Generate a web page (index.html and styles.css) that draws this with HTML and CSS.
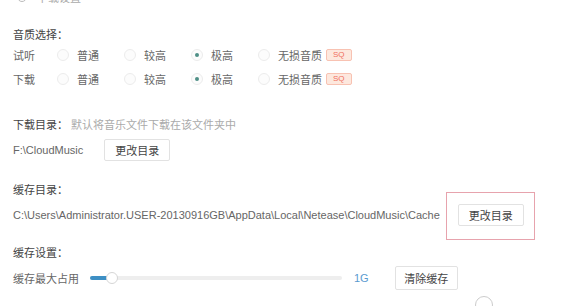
FILE: index.html
```html
<!DOCTYPE html>
<html lang="zh-CN">
<head>
    <meta charset="UTF-8">
    <title>下载设置</title>
    <link rel="stylesheet" href="styles.css">
</head>
<body>
    <!-- header cut off at the top -->
    <div class="top">
        <span class="top-icon"></span>
        <span class="top-text">下载设置</span>
    </div>

    <!-- Quality -->
    <div class="title">音质选择：</div>
    <div class="row">
        <span class="row-label">试听</span>
        <label class="opt"><span class="radio"></span>普通</label>
        <label class="opt"><span class="radio"></span>较高</label>
        <label class="opt"><span class="radio on"></span>极高</label>
        <label class="opt opt-last"><span class="radio"></span>无损音质<span class="badge">SQ</span></label>
    </div>
    <div class="row">
        <span class="row-label">下载</span>
        <label class="opt"><span class="radio"></span>普通</label>
        <label class="opt"><span class="radio"></span>较高</label>
        <label class="opt"><span class="radio on"></span>极高</label>
        <label class="opt opt-last"><span class="radio"></span>无损音质<span class="badge">SQ</span></label>
    </div>

    <!-- Download folder -->
    <div class="title title-dl">下载目录：<span class="desc">默认将音乐文件下载在该文件夹中</span></div>
    <div class="row row-dir">
        <span class="path">F:\CloudMusic</span>
        <button class="btn btn-dir">更改目录</button>
    </div>

    <!-- Cache folder -->
    <div class="title title-cache">缓存目录：</div>
    <div class="row row-dir">
        <span class="path">C:\Users\Administrator.USER-20130916GB\AppData\Local\Netease\CloudMusic\Cache</span>
        <div class="mark">
            <button class="btn">更改目录</button>
        </div>
    </div>

    <!-- Cache size -->
    <div class="title title-size">缓存设置：</div>
    <div class="row row-dir">
        <span class="path">缓存最大占用</span>
        <div class="slider">
            <div class="fill" style="width: 20px"></div>
            <span class="thumb"></span>
        </div>
        <span class="size">1G</span>
        <button class="btn btn-clear">清除缓存</button>
    </div>

    <div class="foot">
        <span class="foot-icon"></span>
    </div>
</body>
</html>
```

FILE: styles.css
```css
body {
    font-family: "Liberation Sans", "Noto Sans CJK SC", sans-serif;
    font-size: 11px;
    color: #666;
    margin: 0;
    padding: 0 0 0 13px;
    background: #fff;
    overflow: hidden;
}
.top {
    display: flex;
    align-items: center;
    height: 14px;
    margin-top: -10px;
    padding-left: 4px;
    color: #aaa;
}
.top-icon {
    width: 8px;
    height: 8px;
    border: 1px solid #bbb;
    border-radius: 50%;
    margin-right: 10px;
}
.title {
    height: 16px;
    line-height: 16px;
    margin-top: 23px;
    color: #444;
}
.title-dl {
    margin-top: 26px;
}
.title-cache {
    margin-top: 20px;
}
.title-size {
    margin-top: 18px;
}
.desc {
    color: #aaa;
    margin-left: 3px;
}
.row {
    display: flex;
    align-items: center;
    height: 24px;
    white-space: nowrap;
}
.row-dir {
    margin-top: 5px;
}
.row-label {
    width: 44px;
    flex-shrink: 0;
}
.opt {
    display: flex;
    align-items: center;
    flex-shrink: 0;
    width: 67px;
    color: #666;
}
.opt-last {
    width: auto;
}
.radio {
    box-sizing: border-box;
    width: 12px;
    height: 12px;
    border: 1px solid #ececec;
    border-radius: 50%;
    background: #fcfcfc;
    margin-right: 8px;
    display: flex;
    align-items: center;
    justify-content: center;
}
.radio.on::after {
    content: "";
    width: 4px;
    height: 4px;
    border-radius: 50%;
    background: #4f8f86;
}
.badge {
    margin-left: 4px;
    padding: 0 6px;
    height: 10px;
    line-height: 10px;
    font-size: 8px;
    color: #f07060;
    background: #fde8de;
    border: 1px solid #f8c2b2;
    border-radius: 2px;
}
.btn {
    font-family: inherit;
    font-size: 11px;
    color: #444;
    background: #fff;
    border: 1px solid #e2e2e2;
    border-radius: 2px;
    width: 66px;
    height: 22px;
    padding: 0;
}
.btn-dir {
    margin-left: 21px;
}
.mark {
    display: flex;
    margin: -12px 0 -13px 6px;
    padding: 11px 10px 13px 11px;
    border: 1px solid #e7a3ad;
}
.slider {
    position: relative;
    flex-shrink: 0;
    width: 252px;
    height: 4px;
    margin-left: 11px;
    background: #eee;
    border-radius: 2px;
}
.fill {
    height: 4px;
    background: #3d8fc4;
    border-radius: 2px;
}
.thumb {
    position: absolute;
    left: 16px;
    top: -4px;
    box-sizing: border-box;
    width: 12px;
    height: 12px;
    border: 1px solid #d6d6d6;
    border-radius: 50%;
    background: #fff;
}
.size {
    margin-left: 12px;
    color: #5a9bd0;
}
.btn-clear {
    margin-left: 26px;
    width: 63px;
    height: 24px;
}
.foot {
    margin-top: 6px;
    padding-left: 462px;
}
.foot-icon {
    display: block;
    width: 18px;
    height: 18px;
    box-sizing: border-box;
    border: 1px solid #ccc;
    border-radius: 50%;
}
```
